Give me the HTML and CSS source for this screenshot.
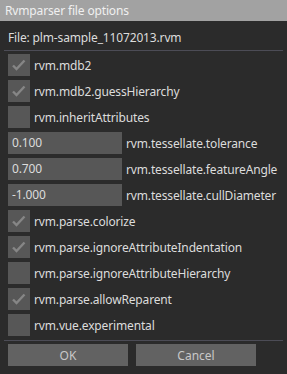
FILE: index.html
```html
<!DOCTYPE html>
<html lang="en">
<head>
  <meta charset="UTF-8">
  <title>Rvmparser file options</title>
  <link rel="stylesheet" href="styles.css">
</head>
<body>
  <div class="window">
    <div class="titlebar">Rvmparser file options</div>
    <div class="content">
      <div class="file">File: plm-sample_11072013.rvm</div>
      <div class="sep"></div>
      <ul class="opts">
        <li><span class="check on"><svg viewBox="0 0 22 22"><path d="M5 11.5l3.5 3.5 8-8.5"/></svg></span><span class="label">rvm.mdb2</span></li>
        <li><span class="check on"><svg viewBox="0 0 22 22"><path d="M5 11.5l3.5 3.5 8-8.5"/></svg></span><span class="label">rvm.mdb2.guessHierarchy</span></li>
        <li><span class="check"></span><span class="label">rvm.inheritAttributes</span></li>
        <li><span class="field">0.100</span><span class="label">rvm.tessellate.tolerance</span></li>
        <li><span class="field">0.700</span><span class="label">rvm.tessellate.featureAngle</span></li>
        <li><span class="field">-1.000</span><span class="label">rvm.tessellate.cullDiameter</span></li>
        <li><span class="check on"><svg viewBox="0 0 22 22"><path d="M5 11.5l3.5 3.5 8-8.5"/></svg></span><span class="label">rvm.parse.colorize</span></li>
        <li><span class="check on"><svg viewBox="0 0 22 22"><path d="M5 11.5l3.5 3.5 8-8.5"/></svg></span><span class="label">rvm.parse.ignoreAttributeIndentation</span></li>
        <li><span class="check"></span><span class="label">rvm.parse.ignoreAttributeHierarchy</span></li>
        <li><span class="check on"><svg viewBox="0 0 22 22"><path d="M5 11.5l3.5 3.5 8-8.5"/></svg></span><span class="label">rvm.parse.allowReparent</span></li>
        <li><span class="check"></span><span class="label">rvm.vue.experimental</span></li>
      </ul>
      <div class="sep sep-bottom"></div>
      <div class="buttons">
        <button type="button">OK</button>
        <button type="button">Cancel</button>
      </div>
    </div>
  </div>
</body>
</html>
```

FILE: styles.css
```css
* {
  box-sizing: border-box;
}
html,
body {
  margin: 0;
  height: 100%;
  background: #2b2b2b;
}
body {
  font-family: "Noto Sans", "Open Sans", sans-serif;
  font-size: 12px;
  letter-spacing: -0.15px;
  color: #dcdcdc;
}
.window {
  width: 287px;
  height: 374px;
}
.titlebar {
  height: 21px;
  line-height: 21px;
  padding-left: 5px;
  background: #a2a2a2;
  color: #f0f0f0;
}
.content {
  padding: 9px 8px 0;
}
.file {
  height: 16px;
  line-height: 16px;
}
.sep {
  height: 1px;
  margin: 4px -4px 3px;
  background: #4c4c56;
}
.opts {
  list-style: none;
  margin: 0;
  padding: 0;
  display: flex;
  flex-direction: column;
  gap: 4px;
}
.opts li {
  display: flex;
  align-items: center;
  gap: 4px;
  height: 22px;
  white-space: nowrap;
}
.check,
.field {
  flex-shrink: 0;
}
.check {
  width: 22px;
  height: 22px;
  background: #575757;
}
.check svg {
  display: block;
  width: 22px;
  height: 22px;
  fill: none;
  stroke: #868686;
  stroke-width: 2.4;
}
.field {
  width: 114px;
  height: 22px;
  line-height: 22px;
  padding-left: 4px;
  background: #575757;
}
.sep-bottom {
  margin-top: 4px;
}
.buttons {
  display: flex;
  gap: 8px;
}
.buttons button {
  width: 120px;
  height: 22px;
  border: none;
  padding: 0;
  background: #626262;
  color: #c8c8c8;
  font: inherit;
}
```
